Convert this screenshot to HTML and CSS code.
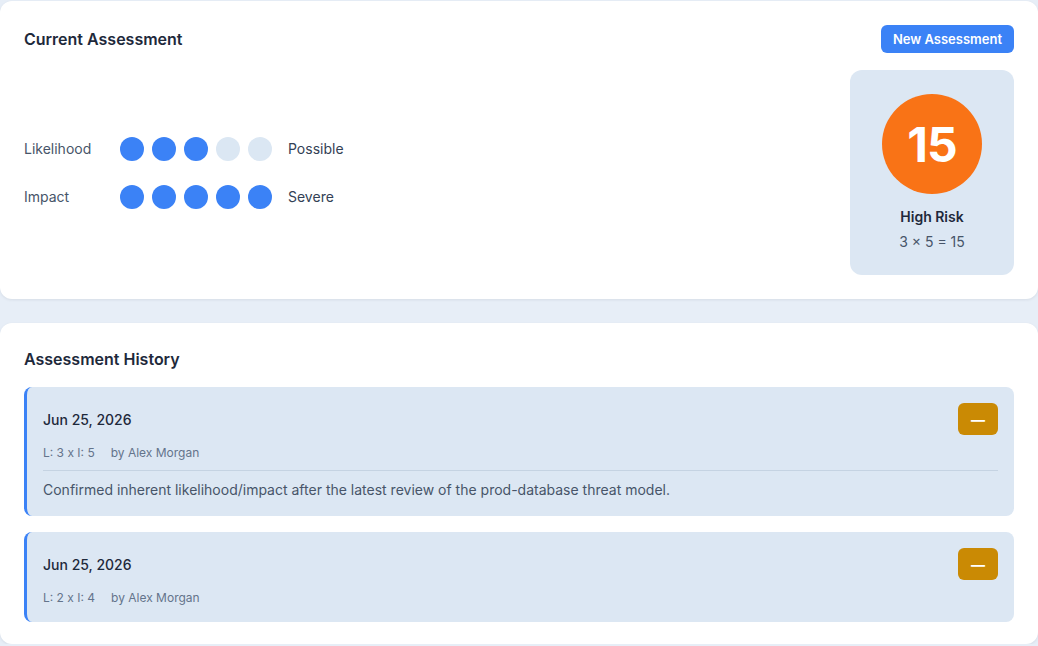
FILE: index.html
```html
<!DOCTYPE html>
<html lang="en">
<head>
<meta charset="utf-8">
<title>Risk Assessment</title>
<link rel="stylesheet" href="styles.css">
</head>
<body>
<div class="page">
  <section class="card current">
    <div class="card-header">
      <h2 class="card-title">Current Assessment</h2>
      <button class="btn-primary">New Assessment</button>
    </div>
    <div class="current-body">
      <div class="scales">
        <div class="scale-row">
          <span class="scale-label">Likelihood</span>
          <div class="dots">
            <span class="dot on"></span><span class="dot on"></span><span class="dot on"></span><span class="dot"></span><span class="dot"></span>
          </div>
          <span class="scale-value">Possible</span>
        </div>
        <div class="scale-row">
          <span class="scale-label">Impact</span>
          <div class="dots">
            <span class="dot on"></span><span class="dot on"></span><span class="dot on"></span><span class="dot on"></span><span class="dot on"></span>
          </div>
          <span class="scale-value">Severe</span>
        </div>
      </div>
      <div class="score-box">
        <div class="score-circle">15</div>
        <div class="score-level">High Risk</div>
        <div class="score-formula">3 × 5 = 15</div>
      </div>
    </div>
  </section>

  <section class="card history">
    <h2 class="card-title history-title">Assessment History</h2>
    <div class="history-list">
      <article class="entry">
        <div class="entry-head">
          <span class="entry-date">Jun 25, 2026</span>
          <span class="badge">—</span>
        </div>
        <div class="entry-meta"><span>L: 3 x I: 5</span><span>by Alex Morgan</span></div>
        <p class="entry-note">Confirmed inherent likelihood/impact after the latest review of the prod-database threat model.</p>
      </article>
      <article class="entry">
        <div class="entry-head">
          <span class="entry-date">Jun 25, 2026</span>
          <span class="badge">—</span>
        </div>
        <div class="entry-meta"><span>L: 2 x I: 4</span><span>by Alex Morgan</span></div>
      </article>
    </div>
  </section>
</div>
</body>
</html>
```

FILE: styles.css
```css
* { box-sizing: border-box; }

html, body {
  margin: 0;
  padding: 0;
  background: #e7eef7;
  font-family: Inter, "Noto Sans", "Liberation Sans", sans-serif;
  color: #1e293b;
}

.page {
  width: 1038px;
  padding-top: 1px;
  display: flex;
  flex-direction: column;
  gap: 24px;
}

.card {
  background: #ffffff;
  border-radius: 12px;
  box-shadow: 0 1px 3px rgba(15, 23, 42, 0.08);
  padding: 24px;
}

.card-header {
  display: flex;
  justify-content: space-between;
  align-items: center;
  margin-bottom: 17px;
}

.card-title {
  margin: 0;
  font-size: 16px;
  line-height: 24px;
  font-weight: 600;
  color: #1e293b;
}

.btn-primary {
  height: 28px;
  padding: 0 12px;
  border: none;
  border-radius: 6px;
  background: #3b82f6;
  color: #ffffff;
  font-family: inherit;
  font-size: 13px;
  font-weight: 600;
}

.current-body {
  display: flex;
  align-items: center;
  justify-content: space-between;
}

.scales {
  display: flex;
  flex-direction: column;
  gap: 24px;
}

.scale-row {
  display: flex;
  align-items: center;
}

.scale-label {
  width: 96px;
  font-size: 14px;
  color: #475569;
}

.dots {
  display: flex;
  gap: 8px;
  margin-right: 16px;
}

.dot {
  width: 24px;
  height: 24px;
  border-radius: 50%;
  background: #dbe7f3;
}

.dot.on { background: #3b82f6; }

.scale-value {
  font-size: 14px;
  color: #334155;
}

.score-box {
  width: 164px;
  background: #dce7f3;
  border-radius: 12px;
  padding: 24px 0 23px;
  display: flex;
  flex-direction: column;
  align-items: center;
}

.score-circle {
  width: 100px;
  height: 100px;
  border-radius: 50%;
  background: #f97316;
  color: #ffffff;
  font-size: 48px;
  font-weight: 700;
  display: flex;
  align-items: center;
  justify-content: center;
  letter-spacing: -1px;
}

.score-level {
  margin-top: 13px;
  font-size: 14px;
  line-height: 20px;
  font-weight: 600;
  color: #1e293b;
}

.score-formula {
  margin-top: 5px;
  font-size: 14px;
  line-height: 20px;
  color: #475569;
}

.history {
  padding-bottom: 22px;
}

.history-title {
  margin-bottom: 16px;
}

.history-list {
  display: flex;
  flex-direction: column;
  gap: 16px;
}

.entry {
  background: #dce7f3;
  border-left: 3px solid #3b82f6;
  border-radius: 8px;
  padding: 16px;
}

.entry-head {
  display: flex;
  justify-content: space-between;
  align-items: center;
  height: 32px;
}

.entry-date {
  font-size: 14px;
  font-weight: 500;
  color: #1e293b;
}

.badge {
  width: 40px;
  height: 32px;
  border-radius: 6px;
  background: #ca8a04;
  color: #ffffff;
  font-size: 14px;
  font-weight: 700;
  display: flex;
  align-items: center;
  justify-content: center;
}

.entry-meta {
  margin-top: 10px;
  display: flex;
  gap: 16px;
  font-size: 12px;
  line-height: 16px;
  color: #64748b;
}

.entry-note {
  margin: 9px 0 0;
  padding-top: 9px;
  border-top: 1px solid #c5d3e2;
  font-size: 14px;
  line-height: 20px;
  color: #475569;
}
```
